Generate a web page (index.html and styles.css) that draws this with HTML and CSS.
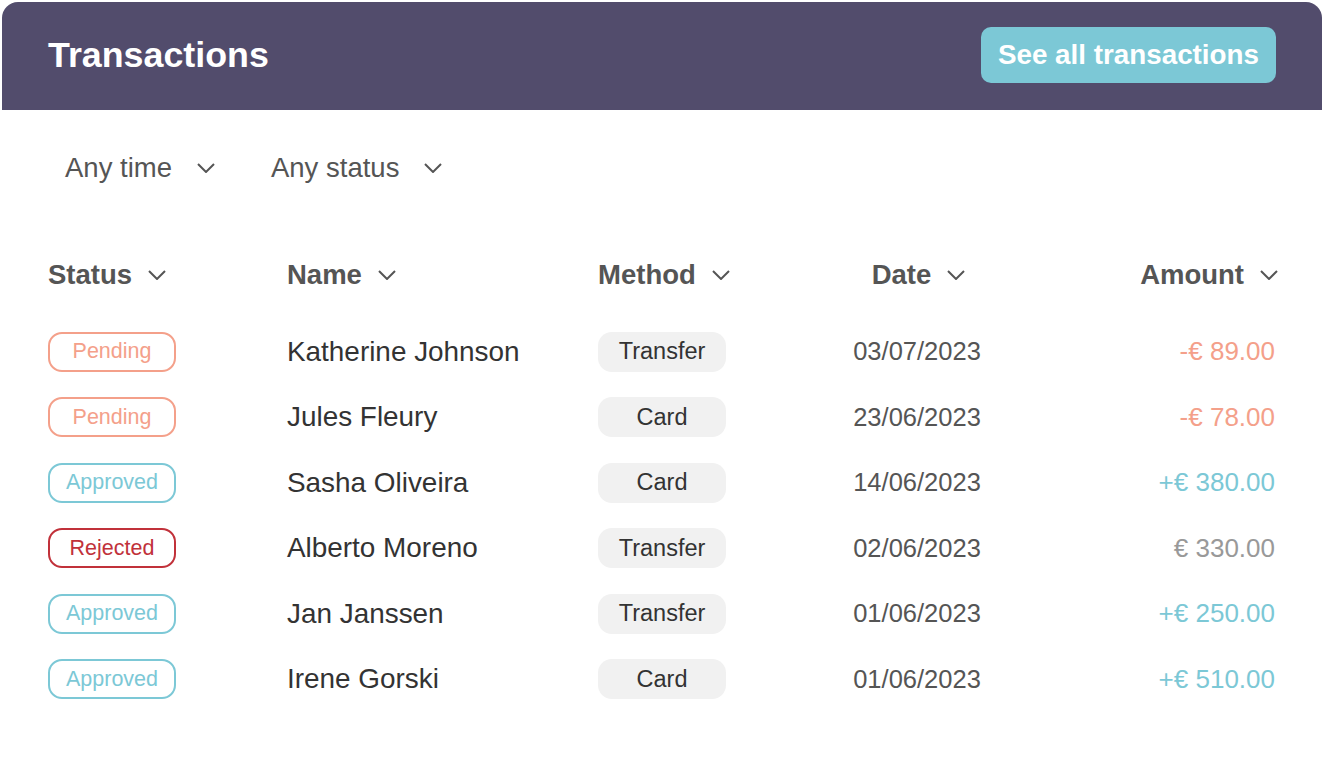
FILE: index.html
```html
<!DOCTYPE html>
<html lang="en">
<head>
  <meta charset="UTF-8" />
  <meta name="viewport" content="width=device-width, initial-scale=1.0">
  <title>Transactions</title>
  <link rel="stylesheet" href="styles.css">
</head>
<body>

  <div class="card">
    <header class="topbar">
      <h1>Transactions</h1>
      <a class="see-all">See all transactions</a>
    </header>

    <div class="filters">
      <div class="filter">Any time
        <svg class="chev" viewBox="0 0 18 10"><path d="M1 1l8 8 8-8"/></svg>
      </div>
      <div class="filter">Any status
        <svg class="chev" viewBox="0 0 18 10"><path d="M1 1l8 8 8-8"/></svg>
      </div>
    </div>

    <div class="table">
      <div class="row head">
        <div class="c-status">Status <svg class="chev" viewBox="0 0 18 10"><path d="M1 1l8 8 8-8"/></svg></div>
        <div class="c-name">Name <svg class="chev" viewBox="0 0 18 10"><path d="M1 1l8 8 8-8"/></svg></div>
        <div class="c-method">Method <svg class="chev" viewBox="0 0 18 10"><path d="M1 1l8 8 8-8"/></svg></div>
        <div class="c-date">Date <svg class="chev" viewBox="0 0 18 10"><path d="M1 1l8 8 8-8"/></svg></div>
        <div class="c-amount">Amount <svg class="chev" viewBox="0 0 18 10"><path d="M1 1l8 8 8-8"/></svg></div>
      </div>

      <div class="row">
        <div class="c-status"><span class="pill pending">Pending</span></div>
        <div class="c-name">Katherine Johnson</div>
        <div class="c-method"><span class="method">Transfer</span></div>
        <div class="c-date">03/07/2023</div>
        <div class="c-amount neg">-€ 89.00</div>
      </div>
      <div class="row">
        <div class="c-status"><span class="pill pending">Pending</span></div>
        <div class="c-name">Jules Fleury</div>
        <div class="c-method"><span class="method">Card</span></div>
        <div class="c-date">23/06/2023</div>
        <div class="c-amount neg">-€ 78.00</div>
      </div>
      <div class="row">
        <div class="c-status"><span class="pill approved">Approved</span></div>
        <div class="c-name">Sasha Oliveira</div>
        <div class="c-method"><span class="method">Card</span></div>
        <div class="c-date">14/06/2023</div>
        <div class="c-amount pos">+€ 380.00</div>
      </div>
      <div class="row">
        <div class="c-status"><span class="pill rejected">Rejected</span></div>
        <div class="c-name">Alberto Moreno</div>
        <div class="c-method"><span class="method">Transfer</span></div>
        <div class="c-date">02/06/2023</div>
        <div class="c-amount">€ 330.00</div>
      </div>
      <div class="row">
        <div class="c-status"><span class="pill approved">Approved</span></div>
        <div class="c-name">Jan Janssen</div>
        <div class="c-method"><span class="method">Transfer</span></div>
        <div class="c-date">01/06/2023</div>
        <div class="c-amount pos">+€ 250.00</div>
      </div>
      <div class="row">
        <div class="c-status"><span class="pill approved">Approved</span></div>
        <div class="c-name">Irene Gorski</div>
        <div class="c-method"><span class="method">Card</span></div>
        <div class="c-date">01/06/2023</div>
        <div class="c-amount pos">+€ 510.00</div>
      </div>
    </div>
  </div>

</body>
</html>
```

FILE: styles.css
```css
* {
  margin: 0;
  padding: 0;
  box-sizing: border-box;
}

html, body {
  height: 100%;
  background: #fff;
  font-family: "Liberation Sans", Arial, sans-serif;
}

.card {
  padding: 2px 2px 0 2px;
}

.topbar {
  height: 108px;
  background: #524c6c;
  border-radius: 16px 16px 0 0;
  padding: 0 46px;
  display: flex;
  justify-content: space-between;
  align-items: center;
}

.topbar h1 {
  color: #fff;
  font-size: 35.8px;
  font-weight: bold;
  margin-top: -1px;
}

.see-all {
  background: #7cc8d6;
  color: #fff;
  font-size: 27.8px;
  font-weight: bold;
  height: 56px;
  padding: 0 17px;
  border-radius: 10px;
  display: flex;
  align-items: center;
  margin-top: -2px;
  cursor: pointer;
}

/* filters */
.filters {
  display: flex;
  gap: 56px;
  padding: 0 0 0 63px;
  margin-top: 38px;
  height: 40px;
  align-items: center;
}

.filter {
  display: flex;
  align-items: center;
  gap: 25px;
  font-size: 27.5px;
  color: #555;
}

.chev {
  width: 18px;
  height: 10px;
  fill: none;
  stroke: #555;
  stroke-width: 2;
  flex-shrink: 0;
}

/* table */
.table {
  padding: 0 44px 0 46px;
  margin-top: 67px;
}

.row {
  display: grid;
  grid-template-columns: 239px 290px 170px 340px 191px;
  height: 65.5px;
  align-items: center;
}

.row > div {
  display: flex;
  align-items: center;
}

.c-name {
  font-size: 27.9px;
  color: #333;
}

.c-method,
.c-date {
  justify-content: center;
}

.c-date {
  font-size: 25.5px;
  color: #555;
}

.c-amount {
  justify-content: flex-end;
  font-size: 26px;
  color: #999;
  padding-right: 3px;
}

.c-amount.neg { color: #f4a08a; }
.c-amount.pos { color: #7cc8d6; }

.row.head {
  height: 40px;
  margin-bottom: 24px;
  font-size: 27.5px;
  font-weight: bold;
  color: #555;
}

.row.head > div {
  gap: 16px;
  color: #555;
  font-size: 27.5px;
}

.row.head .c-method {
  padding-left: 4px;
}

.row.head .c-date {
  padding-left: 3px;
}

.row.head .c-amount {
  padding-right: 0;
}

.pill {
  width: 128px;
  height: 40px;
  border: 2px solid;
  border-radius: 14px;
  display: flex;
  align-items: center;
  justify-content: center;
  font-size: 21.5px;
}

.pill.pending { color: #f4a08a; border-color: #f4a08a; }
.pill.approved { color: #7cc8d6; border-color: #7cc8d6; }
.pill.rejected { color: #c1313a; border-color: #c1313a; }

.method {
  width: 128px;
  height: 40px;
  background: #f1f1f1;
  border-radius: 14px;
  display: flex;
  align-items: center;
  justify-content: center;
  font-size: 23.5px;
  color: #333;
}
```
